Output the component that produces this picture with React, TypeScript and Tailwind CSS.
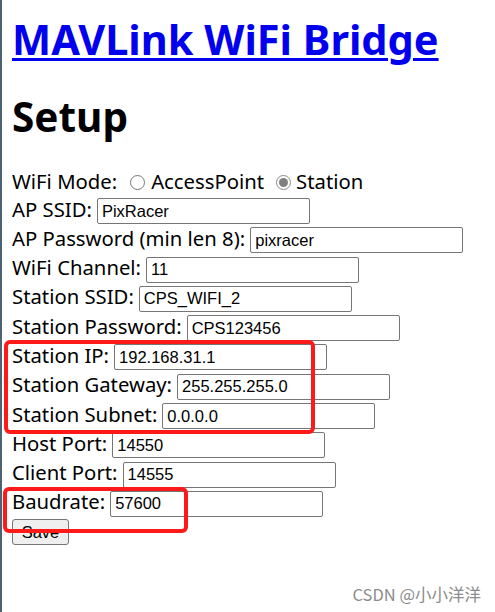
import React from 'react';

const labelFont = { fontFamily: '"Noto Sans", "Open Sans", sans-serif' };

interface FieldProps {
  label: string;
  value: string;
}

const Field: React.FC<FieldProps> = ({ label, value }) => (
  <div className="flex items-baseline h-[29.3px]">
    <span className="text-[20.3px] leading-[25px] text-black whitespace-nowrap">{label}</span>
    <input
      readOnly
      value={value}
      className="ml-[5px] w-[213px] h-[26px] px-[4px] py-0 border border-[#767676] rounded-[2px] bg-white text-[16.5px] leading-[24px] text-black font-['Liberation_Sans',Arial,sans-serif] outline-none"
    />
  </div>
);

const Radio: React.FC<{ checked?: boolean }> = ({ checked }) => (
  <span className={`inline-flex items-center justify-center w-[15px] h-[15px] rounded-full border ${checked ? 'border-[#8a8a8a]' : 'border-[#767676]'} bg-white mt-[2px]`}>
    {checked && <span className="w-[9px] h-[9px] rounded-full bg-[#808080]" />}
  </span>
);

const fields: FieldProps[] = [
  { label: 'AP SSID:', value: 'PixRacer' },
  { label: 'AP Password (min len 8):', value: 'pixracer' },
  { label: 'WiFi Channel:', value: '11' },
  { label: 'Station SSID:', value: 'CPS_WIFI_2' },
  { label: 'Station Password:', value: 'CPS123456' },
  { label: 'Station IP:', value: '192.168.31.1' },
  { label: 'Station Gateway:', value: '255.255.255.0' },
  { label: 'Station Subnet:', value: '0.0.0.0' },
  { label: 'Host Port:', value: '14550' },
  { label: 'Client Port:', value: '14555' },
  { label: 'Baudrate:', value: '57600' },
];

export default function App() {
  return (
    <div className="relative w-[495px] h-[612px] overflow-hidden bg-white border-l-2 border-[#4d6273]" style={labelFont}>
      <div className="pl-[10px]">
        {/* Title */}
        <h1 className="mt-[15px] text-[41.5px] leading-[48px] font-bold">
          <a href="#" className="text-[#0000ee] underline decoration-[3px] underline-offset-[3px]">
            MAVLink WiFi Bridge
          </a>
        </h1>
        <h1 className="mt-[29.5px] text-[40.5px] leading-[48px] font-bold text-black">Setup</h1>

        {/* Form */}
        <form className="mt-[28px]" onSubmit={e => e.preventDefault()}>
          <div className="flex items-start h-[28px] text-[20.3px] leading-[25px] text-black">
            <span>WiFi Mode:</span>
            <span className="flex items-center ml-[13px] h-[25px]">
              <Radio />
            </span>
            <span className="ml-[6px]">AccessPoint</span>
            <span className="flex items-center ml-[12px] h-[25px]">
              <Radio checked />
            </span>
            <span className="ml-[5px]">Station</span>
          </div>

          {fields.map(f => (
            <Field key={f.label} label={f.label} value={f.value} />
          ))}

          <button
            type="submit"
            className="w-[57px] h-[26px] border border-[#767676] rounded-[3px] bg-[#efefef] text-[16.5px] leading-[24px] text-black font-['Liberation_Sans',Arial,sans-serif]"
          >
            Save
          </button>
        </form>
      </div>

      {/* Annotation boxes */}
      <div className="absolute left-[2px] top-[340px] w-[311px] h-[94px] border-[4px] border-[#ff1a1a] rounded-[6px] pointer-events-none" />
      <div className="absolute left-[1px] top-[487px] w-[185px] h-[46px] border-[4px] border-[#ff1a1a] rounded-[6px] pointer-events-none" />

      {/* Watermark */}
      <div className="absolute right-[14px] bottom-[8px] text-[16.5px] leading-[20px] text-[#8c8c8c] font-['Noto_Sans_CJK_SC',sans-serif]">
        CSDN @小小洋洋
      </div>
    </div>
  );
}
